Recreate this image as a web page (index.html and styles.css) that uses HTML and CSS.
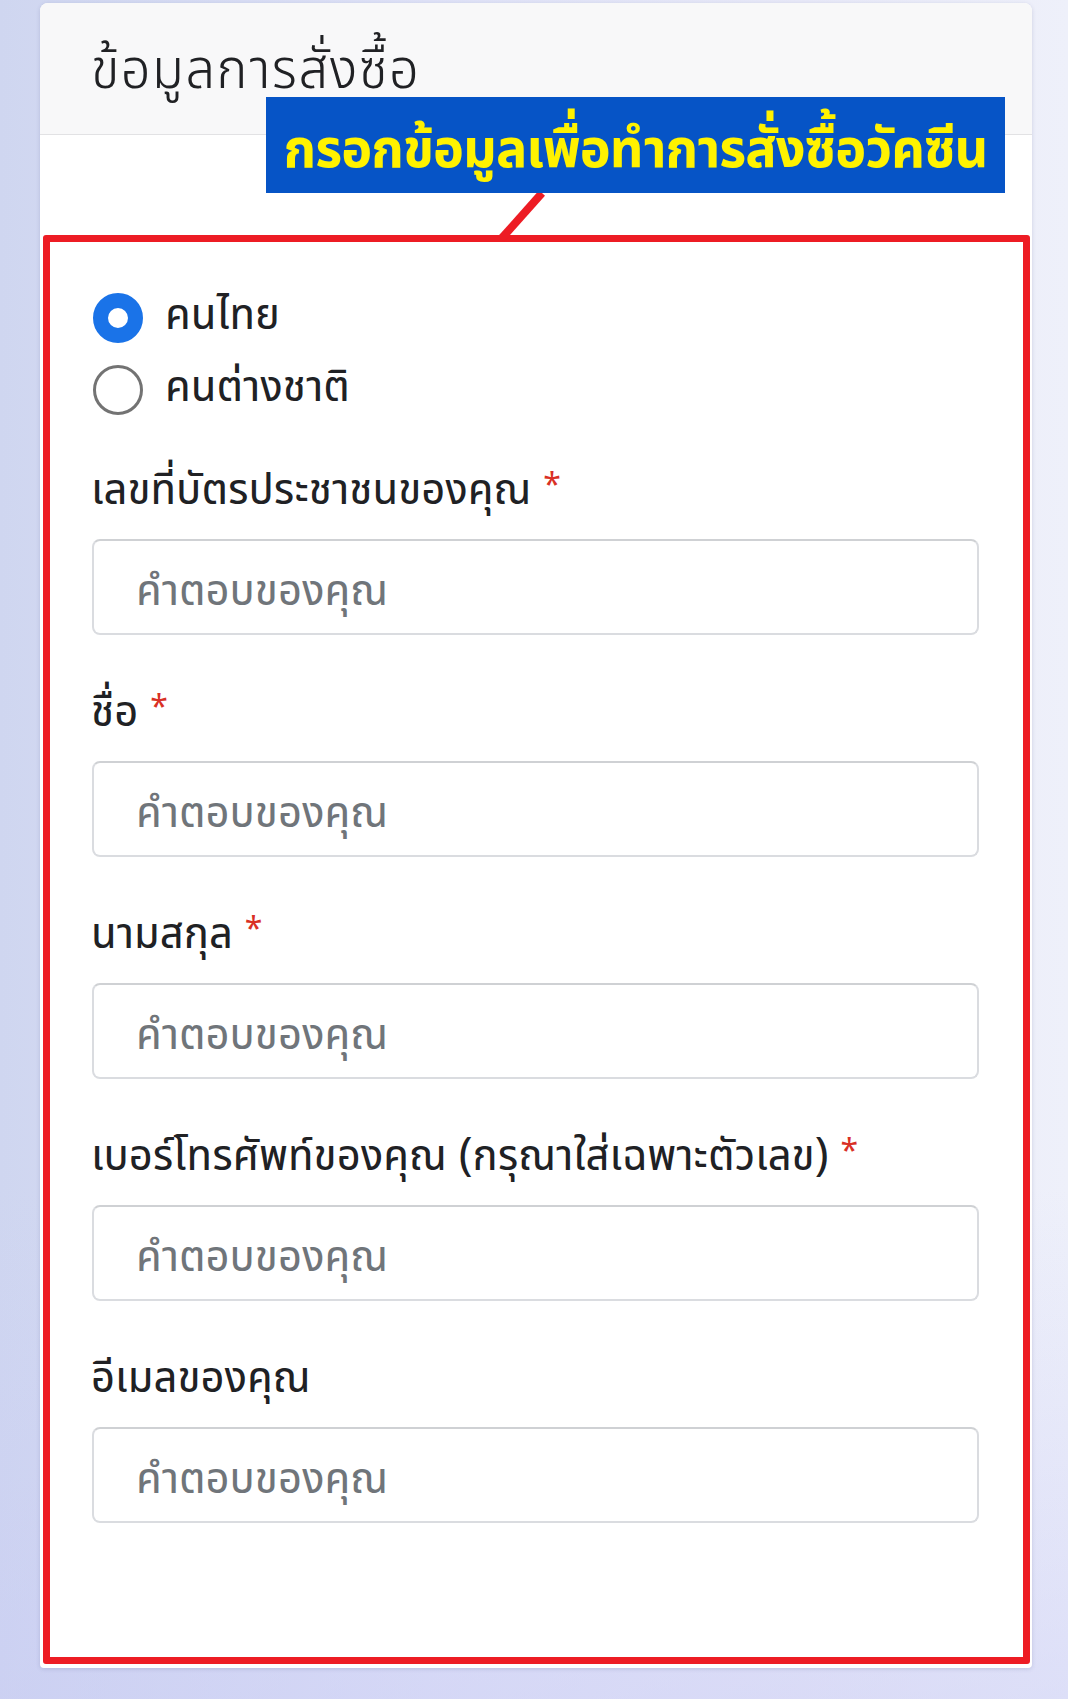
FILE: index.html
```html
<!DOCTYPE html>
<html lang="th">
    <head>
        <meta charset="UTF-8">
        <title>ข้อมูลการสั่งซื้อ</title>
        <link rel="stylesheet" href="styles.css">
    </head>
    <body>
        <div class="page">
            <div class="card">
                <div class="card-head">
                    <div class="title">ข้อมูลการสั่งซื้อ</div>
                </div>

                <div class="note">กรอกข้อมูลเพื่อทำการสั่งซื้อวัคซีน</div>
                <svg class="pointer" width="60" height="50" viewBox="0 0 60 50">
                    <line x1="46" y1="0" x2="5" y2="46" stroke="#ed1c24" stroke-width="8"/>
                </svg>

                <div class="form">
                    <div class="options">
                        <div class="option">
                            <span class="radio checked"></span>
                            <span class="option-text">คนไทย</span>
                        </div>
                        <div class="option">
                            <span class="radio"></span>
                            <span class="option-text">คนต่างชาติ</span>
                        </div>
                    </div>

                    <div class="question">
                        <div class="label">เลขที่บัตรประชาชนของคุณ <span class="req">*</span></div>
                        <div class="field">คำตอบของคุณ</div>
                    </div>
                    <div class="question">
                        <div class="label">ชื่อ <span class="req">*</span></div>
                        <div class="field">คำตอบของคุณ</div>
                    </div>
                    <div class="question">
                        <div class="label">นามสกุล <span class="req">*</span></div>
                        <div class="field">คำตอบของคุณ</div>
                    </div>
                    <div class="question">
                        <div class="label">เบอร์โทรศัพท์ของคุณ (กรุณาใส่เฉพาะตัวเลข) <span class="req">*</span></div>
                        <div class="field">คำตอบของคุณ</div>
                    </div>
                    <div class="question">
                        <div class="label">อีเมลของคุณ</div>
                        <div class="field">คำตอบของคุณ</div>
                    </div>
                </div>
            </div>
        </div>
    </body>
</html>
```

FILE: styles.css
```css
body {
    margin: 0;
    font-family: "Noto Sans Thai UI", "Noto Sans Thai", "Noto Sans", sans-serif;
    color: #202124;
}

.page {
    height: 1699px;
    padding: 3px 36px 0 40px;
    box-sizing: border-box;
    overflow: hidden;
    background: linear-gradient(180deg, rgba(255, 255, 255, 0) 70%, rgba(200, 202, 245, .45) 100%),
                linear-gradient(90deg, #cfd6f0 0%, #dfe2f7 40%, #e8e9f8 75%, #eef0fa 100%);
}

.card {
    position: relative;
    background: #fff;
    border-radius: 8px 8px 4px 4px;
    box-shadow: 0 1px 4px 0 rgba(60, 64, 120, .18);
    padding-bottom: 4px;
}

.card-head {
    height: 131px;
    background: #f8f8f9;
    border-bottom: 1px solid #e2e2e4;
    border-radius: 8px 8px 0 0;
    padding-left: 51px;
    box-sizing: content-box;
}

.title {
    font-size: 58px;
    font-stretch: 80%;
    font-weight: 350;
    line-height: 126px;
    letter-spacing: 1.5px;
    color: #202124;
}

.note {
    position: absolute;
    left: 226px;
    top: 94px;
    width: 739px;
    height: 96px;
    background: #0654c6;
    color: #fff200;
    font-weight: 700;
    font-size: 56px;
    font-stretch: 80%;
    line-height: 96px;
    text-align: center;
    letter-spacing: -1px;
    white-space: nowrap;
    overflow: hidden;
}

.pointer {
    position: absolute;
    left: 456px;
    top: 190px;
}

.form {
    margin: 100px 2px 0 3px;
    border: 7px solid #ed1c24;
    border-radius: 3px;
    padding: 40px 44px 134px 41px;
}

.options {
    margin-bottom: 35px;
}

.option {
    display: flex;
    align-items: center;
    height: 72px;
}

.radio {
    width: 50px;
    height: 50px;
    box-sizing: border-box;
    border: 3px solid #737373;
    border-radius: 50%;
    margin-left: 2px;
}

.radio.checked {
    border: 15px solid #1a73e8;
}

.option-text {
    margin: 0 0 14px 22px;
    font-size: 46px;
    font-stretch: 80%;
    font-weight: 380;
}

.question {
    margin-bottom: 48px;
}

.question:last-child {
    margin-bottom: 0;
}

.label {
    height: 50px;
    font-size: 46px;
    font-stretch: 80%;
    font-weight: 380;
    line-height: 50px;
    margin-bottom: 28px;
}

.req {
    color: #d93025;
    font-size: 32px;
    line-height: 1;
    vertical-align: 8px;
}

.field {
    height: 96px;
    box-sizing: border-box;
    border: 2px solid #dadce0;
    border-top-color: #cfd1d4;
    border-radius: 8px;
    padding-left: 42px;
    font-size: 46px;
    font-stretch: 80%;
    font-weight: 380;
    line-height: 92px;
    color: #70757a;
    margin-left: 1px;
}
```
